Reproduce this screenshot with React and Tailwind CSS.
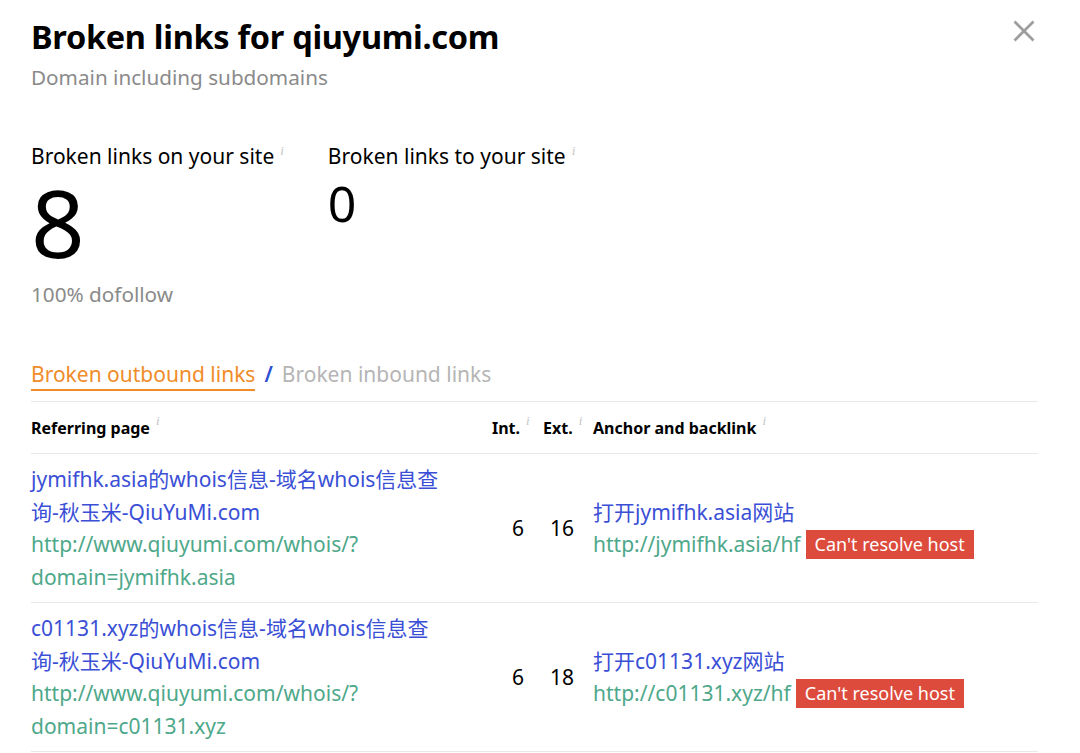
const font = { fontFamily: '"Noto Sans", "Noto Sans CJK SC", sans-serif' }

const rows = [
  {
    title: ['jymifhk.asia的whois信息-域名whois信息查', '询-秋玉米-QiuYuMi.com'],
    url1: 'http://www.qiuyumi.com/whois/?',
    url2: 'domain=jymifhk.asia',
    int: 6,
    ext: 16,
    anchor: '打开jymifhk.asia网站',
    link: 'http://jymifhk.asia/hf',
  },
  {
    title: ['c01131.xyz的whois信息-域名whois信息查', '询-秋玉米-QiuYuMi.com'],
    url1: 'http://www.qiuyumi.com/whois/?',
    url2: 'domain=c01131.xyz',
    int: 6,
    ext: 18,
    anchor: '打开c01131.xyz网站',
    link: 'http://c01131.xyz/hf',
  },
]

function Info() {
  return (
    <span
      className="inline-block ml-[6px] text-[13px] leading-none italic text-[#c4c4c4] font-normal relative -top-[9px]"
      style={{ fontFamily: '"Liberation Serif", serif' }}
    >
      i
    </span>
  )
}

export default function App() {
  return (
    <div className="w-[1080px] h-[753px] bg-white overflow-hidden px-[31px] pt-[16px] text-black" style={font}>
      <div className="flex items-start justify-between">
        <div>
          <h1 className="text-[32.5px] leading-[42px] font-bold tracking-[-0.3px]">Broken links for qiuyumi.com</h1>
          <p className="text-[20.7px] leading-[30px] text-[#8a8a8a] mt-[4px]">Domain including subdomains</p>
        </div>
        <svg width="22" height="22" viewBox="0 0 22 22" className="mt-[4px] mr-[14px]">
          <path d="M1.5 1.5 L20.5 20.5 M20.5 1.5 L1.5 20.5" stroke="#9e9e9e" strokeWidth="2.8" />
        </svg>
      </div>

      <div className="flex gap-[44px] mt-[50px]">
        <div>
          <div className="text-[21px] leading-[28px]">Broken links on your site<Info /></div>
          <div className="text-[94px] leading-[94px] mt-[5px]">8</div>
          <div className="text-[20.7px] leading-[28px] text-[#8a8a8a] mt-[11px]">100% dofollow</div>
        </div>
        <div>
          <div className="text-[21px] leading-[28px]">Broken links to your site<Info /></div>
          <div className="text-[50px] leading-[50px] mt-[8px]">0</div>
        </div>
      </div>

      <div className="flex items-start gap-[9px] mt-[52px] text-[21px] leading-[28px]">
        <span className="text-[#f08c2a] border-b-2 border-[#f08c2a] pb-[1px]">Broken outbound links</span>
        <span className="text-[#2d4fd3] font-semibold">/</span>
        <span className="text-[#b5b5b5]">Broken inbound links</span>
      </div>

      <div className="mt-[10px] w-[1007px] border-t border-[#e8e8e8]">
        <div className="grid grid-cols-[461px_51px_50px_1fr] h-[52px] items-center text-[16px] font-bold border-b border-[#e8e8e8]">
          <div>Referring page<Info /></div>
          <div>Int.<Info /></div>
          <div>Ext.<Info /></div>
          <div>Anchor and backlink<Info /></div>
        </div>
        {rows.map((r, i) => (
          <div key={i} className="grid grid-cols-[461px_51px_50px_1fr] items-center py-[9px] border-b border-[#e8e8e8] text-[21px] leading-[32.5px]">
            <div>
              <div className="text-[#3a4fd6] whitespace-nowrap">{r.title[0]}<br />{r.title[1]}</div>
              <div className="text-[#4ea88a]">{r.url1}<br />{r.url2}</div>
            </div>
            <div className="text-right pr-[19px]">{r.int}</div>
            <div className="text-right pr-[19px]">{r.ext}</div>
            <div>
              <div className="text-[#3a4fd6]">{r.anchor}</div>
              <div className="flex items-center gap-[5px]">
                <span className="text-[#4ea88a]">{r.link}</span>
                <span className="bg-[#dd4b3d] text-white text-[18px] leading-[29px] px-[9px]">Can't resolve host</span>
              </div>
            </div>
          </div>
        ))}
      </div>
    </div>
  )
}
